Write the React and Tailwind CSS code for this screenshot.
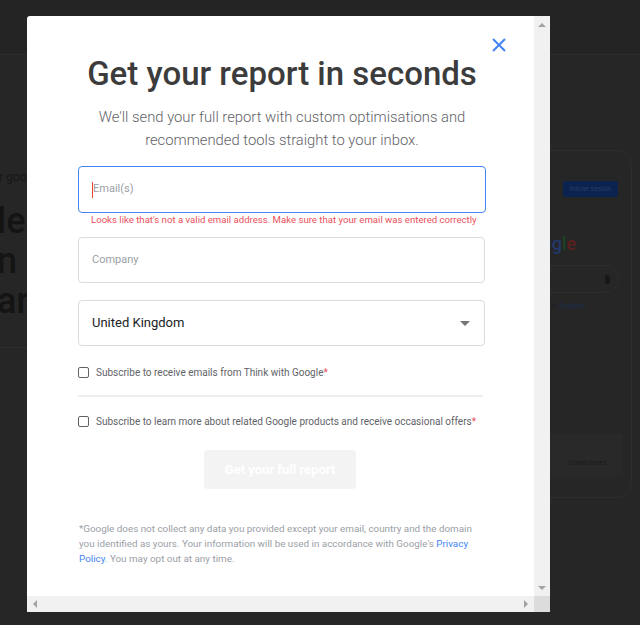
import React from "react";

const font = { fontFamily: "Roboto, 'Noto Sans', Arial, sans-serif" };

function Checkbox({ children }) {
    return (
        <label className="flex items-center gap-[7px] h-[16px] text-[10px] text-[#5f6368] whitespace-nowrap">
            <span className="w-[11px] h-[11px] border border-[#5f6368] rounded-[2px] shrink-0" />
            <span>{children}<span className="text-[#e8505b]">*</span></span>
        </label>
    );
}

function BackdropPage() {
    return (
        <div className="h-full w-full bg-[#262626]">
            <div className="h-[55px] border-b border-[#2b2b2b] bg-[#242424]" />
            <div className="flex">
                <div className="w-[60px] overflow-hidden pt-[114px]">
                    <div className="-ml-[1px] whitespace-nowrap text-[12px] leading-[16px] text-[#171717]">r goo</div>
                    <div className="-ml-[3px] mt-[16px] whitespace-nowrap text-[36px] font-medium leading-[40px] text-[#141414]">
                        <div>le</div>
                        <div>n U</div>
                        <div>anc</div>
                    </div>
                    <div className="mt-[26px] h-px bg-[#2f2f2f]" />
                </div>
                <div className="ml-auto mr-[8px] mt-[95px] w-[140px] h-[348px] rounded-[16px] border border-[#2e2e2e] flex flex-col">
                    <div className="flex justify-end pr-[13px] pt-[30px]">
                        <div className="w-[55px] h-[16px] rounded-[2px] bg-[#0c2350] text-[7px] leading-[16px] text-center text-[#243e6b]">Iniciar sesión</div>
                    </div>
                    <div className="pl-[26px] mt-[38px] text-[18px] leading-[18px] font-medium whitespace-nowrap">
                        <span className="text-[#1d355f]">Goo</span>
                        <span className="text-[#22396a]">g</span>
                        <span className="text-[#1c4226]">l</span>
                        <span className="text-[#5c201d]">e</span>
                    </div>
                    <div className="ml-[10px] mr-[12px] mt-[12px] h-[28px] rounded-full border border-[#2c2c2c] flex items-center justify-end pr-[8px]">
                        <span className="w-[5px] h-[9px] rounded-full bg-[#181818]" />
                    </div>
                    <div className="pl-[58px] mt-[8px] text-[8px] leading-[10px] text-[#1c1c1c] whitespace-nowrap">n: <span className="text-[#1c2f52]">English</span></div>
                    <div className="mt-auto mb-[20px] mx-[8px] h-[43px] bg-[#292929] flex items-center pt-[16px] pl-[67px] text-[7px] text-[#191919]">Condiciones</div>
                </div>
            </div>
        </div>
    );
}

export default function App() {
    return (
        <div className="relative w-[640px] h-[625px] overflow-hidden" style={font}>
            <BackdropPage />
            <div className="absolute left-[27px] top-[16px] w-[523px] h-[596px] bg-white rounded-tl-[3px] overflow-hidden flex flex-col">
                <div className="flex flex-1 min-h-0">
                    <div className="relative flex-1 pl-[51px] pt-[38px]">
                        <button className="absolute right-[28px] top-[22px] w-[14px] h-[14px]" aria-label="Close">
                            <svg viewBox="0 0 14 14" className="w-[14px] h-[14px]" fill="none" stroke="#4285f4" strokeWidth="2">
                                <path d="M1 1l12 12M13 1L1 13" />
                            </svg>
                        </button>
                        <div className="w-[408px]">
                            <h1 className="text-center text-[33px] leading-[40px] font-medium text-[#3c3c3c] whitespace-nowrap">
                                Get your report in seconds
                            </h1>
                            <p className="mt-[12px] text-center text-[14.8px] leading-[23px] font-light text-[#5f6368]">
                                We'll send your full report with custom optimisations and<br />
                                recommended tools straight to your inbox.
                            </p>
                            <div className="mt-[14px] h-[47px] rounded-[4px] border border-[#4285f4] flex items-center pl-[13px] text-[11px] text-[#9aa0a6]">
                                <span className="w-px h-[16px] bg-[#ea4335]" />
                                <span>Email(s)</span>
                            </div>
                            <div className="pl-[13px] h-[14px] text-[9.6px] leading-[14px] text-[#e8505b] whitespace-nowrap">
                                Looks like that's not a valid email address. Make sure that your email was entered correctly
                            </div>
                            <div className="mt-[10px] h-[46px] w-[407px] rounded-[4px] border border-[#dadce0] flex items-center pl-[13px] text-[11px] text-[#9aa0a6]">
                                Company
                            </div>
                            <div className="mt-[17px] h-[46px] w-[407px] rounded-[4px] border border-[#dadce0] flex items-center justify-between pl-[13px] pr-[14px] text-[13px] text-[#202124]">
                                <span>United Kingdom</span>
                                <span className="w-0 h-0 border-l-[5px] border-r-[5px] border-t-[5px] border-l-transparent border-r-transparent border-t-[#757575]" />
                            </div>
                            <div className="mt-[18px]">
                                <Checkbox>Subscribe to receive emails from Think with Google</Checkbox>
                            </div>
                            <div className="mt-[15px] h-[2px] w-[405px] bg-[#eceef0]" />
                            <div className="mt-[16px]">
                                <Checkbox>Subscribe to learn more about related Google products and receive occasional offers</Checkbox>
                            </div>
                            <div className="mt-[21px] flex justify-center pr-[4px]">
                                <button className="w-[152px] h-[39px] rounded-[4px] bg-[#f3f3f3] text-white text-[13px] font-bold">
                                    Get your full report
                                </button>
                            </div>
                            <p className="mt-[32px] pl-[1px] text-[9.85px] leading-[15px] text-[#9aa0a6] whitespace-nowrap">
                                *Google does not collect any data you provided except your email, country and the domain<br />
                                you identified as yours. Your information will be used in accordance with Google's <span className="text-[#4285f4]">Privacy</span><br />
                                <span className="text-[#4285f4]">Policy</span>. You may opt out at any time.
                            </p>
                        </div>
                    </div>
                    <div className="w-[16px] bg-[#f1f1f1] flex flex-col items-center justify-between pt-[7px] pb-[6px]">
                        <span className="w-0 h-0 border-l-[4px] border-r-[4px] border-b-[4px] border-l-transparent border-r-transparent border-b-[#a3a3a3]" />
                        <span className="w-0 h-0 border-l-[4px] border-r-[4px] border-t-[4px] border-l-transparent border-r-transparent border-t-[#a3a3a3]" />
                    </div>
                </div>
                <div className="flex h-[16px]">
                    <div className="flex-1 bg-[#f1f1f1] flex items-center justify-between px-[6px]">
                        <span className="w-0 h-0 border-t-[4px] border-b-[4px] border-r-[4px] border-t-transparent border-b-transparent border-r-[#a3a3a3]" />
                        <span className="w-0 h-0 border-t-[4px] border-b-[4px] border-l-[4px] border-t-transparent border-b-transparent border-l-[#a3a3a3]" />
                    </div>
                    <div className="w-[16px] bg-[#dcdcdc]" />
                </div>
            </div>
        </div>
    );
}
